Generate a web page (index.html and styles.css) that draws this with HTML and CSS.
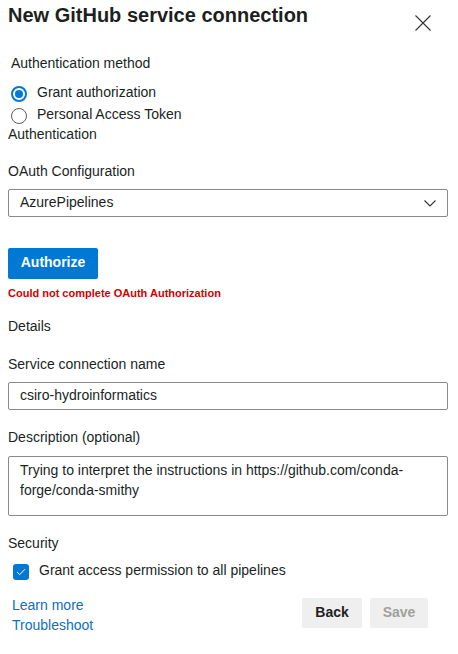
FILE: index.html
```html
<!DOCTYPE html>
<html lang="en">
<head>
<meta charset="utf-8">
<title>New GitHub service connection</title>
<link rel="stylesheet" href="styles.css">
</head>
<body>
<div class="panel">
  <header class="head">
    <h1 class="title">New GitHub service connection</h1>
    <button class="close" aria-label="Close">
      <svg width="16" height="16" viewBox="0 0 16 16"><path d="M0.5 0.5 L15.5 15.5 M15.5 0.5 L0.5 15.5" stroke="#333" stroke-width="1.1" fill="none"/></svg>
    </button>
  </header>

  <div class="label label-method">Authentication method</div>
  <div class="radios">
    <label class="radio"><span class="dot dot-on"></span>Grant authorization</label>
    <label class="radio"><span class="dot"></span>Personal Access Token</label>
  </div>
  <div class="label label-auth">Authentication</div>

  <div class="label label-oauth">OAuth Configuration</div>
  <div class="field select">
    <span>AzurePipelines</span>
    <svg class="chev" width="12" height="7" viewBox="0 0 12 7"><path d="M0.5 0.5 L6 6 L11.5 0.5" stroke="#333" stroke-width="1.1" fill="none"/></svg>
  </div>

  <button class="primary">Authorize</button>
  <div class="error">Could not complete OAuth Authorization</div>

  <div class="label label-details">Details</div>
  <div class="label label-name">Service connection name</div>
  <div class="field input">csiro-hydroinformatics</div>

  <div class="label label-gap2">Description (optional)</div>
  <div class="field area">Trying to interpret the instructions in https://github.com/conda-forge/conda-smithy</div>

  <div class="label label-gap2">Security</div>
  <label class="check"><span class="box"><svg width="10" height="8" viewBox="0 0 10 8"><path d="M1 4 L3.8 6.6 L9 1.2" stroke="#fff" stroke-width="1" fill="none"/></svg></span>Grant access permission to all pipelines</label>

  <footer class="foot">
    <div class="links">
      <a href="#">Learn more</a>
      <a href="#">Troubleshoot</a>
    </div>
    <div class="actions">
      <button class="secondary">Back</button>
      <button class="secondary disabled">Save</button>
    </div>
  </footer>
</div>
</body>
</html>
```

FILE: styles.css
```css
* { box-sizing: border-box; }
html, body { margin: 0; background: #fff; }
body {
  font-family: "Liberation Sans", Arial, sans-serif;
  font-size: 14px;
  line-height: 20px;
  color: #201f1e;
}
.panel {
  width: 458px;
  padding: 3px 10px 20px 8px;
}
.head {
  display: flex;
  justify-content: space-between;
  align-items: flex-start;
  height: 24px;
}
.title {
  margin: 0;
  font-size: 20px;
  line-height: 24px;
  font-weight: 700;
  color: #201f1e;
}
.close {
  margin: 12px 17px 0 0;
  padding: 0;
  border: 0;
  background: none;
  width: 16px;
  height: 16px;
  display: block;
}
.close svg { display: block; }
.label { line-height: 20px; }
.label-method { margin: 26px 0 0 3px; }
.radios { margin: 8px 0 0 3px; }
.radio {
  display: flex;
  align-items: center;
  height: 22px;
  line-height: 22px;
}
.dot {
  width: 16px;
  height: 16px;
  border-radius: 50%;
  border: 1px solid #605e5c;
  margin: 3px 10px 0 0;
  flex: none;
  position: relative;
}
.dot-on {
  border: 2px solid #0078d4;
}
.dot-on::after {
  content: "";
  position: absolute;
  left: 2px;
  top: 2px;
  width: 8px;
  height: 8px;
  border-radius: 50%;
  background: #0078d4;
}
.label-auth { margin-top: -1px; }
.label-oauth { margin-top: 17px; }
.label-details { margin-top: 15px; }
.label-name { margin-top: 18px; }
.label-gap2 { margin-top: 17px; }
.field {
  border: 1px solid #8a8886;
  border-radius: 2px;
  padding: 0 11px;
  color: #201f1e;
}
.select {
  margin-top: 8px;
  height: 28px;
  padding-bottom: 3px;
  display: flex;
  align-items: center;
  justify-content: space-between;
}
.chev { display: block; margin-top: 3px; }
.input {
  margin-top: 8px;
  height: 28px;
  padding-top: 2px;
}
.area {
  margin-top: 9px;
  height: 60px;
  padding-top: 3px;
  line-height: 20px;
}
.primary {
  display: block;
  margin-top: 31px;
  width: 90px;
  height: 31px;
  border: 0;
  border-radius: 2px;
  background: #0078d4;
  color: #fff;
  font: 700 14px/20px "Liberation Sans", Arial, sans-serif;
  padding: 0 0 3px;
}
.error {
  margin-top: 6px;
  font-size: 11px;
  line-height: 16px;
  font-weight: 700;
  color: #d40000;
}
.check {
  display: flex;
  align-items: flex-start;
  margin: 7px 0 0 5px;
  line-height: 20px;
}
.box {
  width: 16px;
  height: 16px;
  border-radius: 3px;
  background: #0078d4;
  margin: 4px 10px 0 0;
  display: flex;
  align-items: center;
  justify-content: center;
  flex: none;
}
.box svg { display: block; }
.foot {
  margin-top: 15px;
  display: flex;
  justify-content: space-between;
  align-items: flex-start;
}
.links { display: flex; flex-direction: column; margin-left: 4px; }
.links a {
  color: #106ebe;
  text-decoration: none;
  line-height: 20px;
}
.actions {
  display: flex;
  gap: 8px;
  margin: 3px 20px 0 0;
}
.secondary {
  height: 30px;
  border: 0;
  border-radius: 2px;
  background: #efefef;
  color: #201f1e;
  font: 700 14px/20px "Liberation Sans", Arial, sans-serif;
  padding: 0 0 2px;
  width: 60px;
}
.secondary.disabled {
  width: 58px;
  color: #a19f9d;
}
```
